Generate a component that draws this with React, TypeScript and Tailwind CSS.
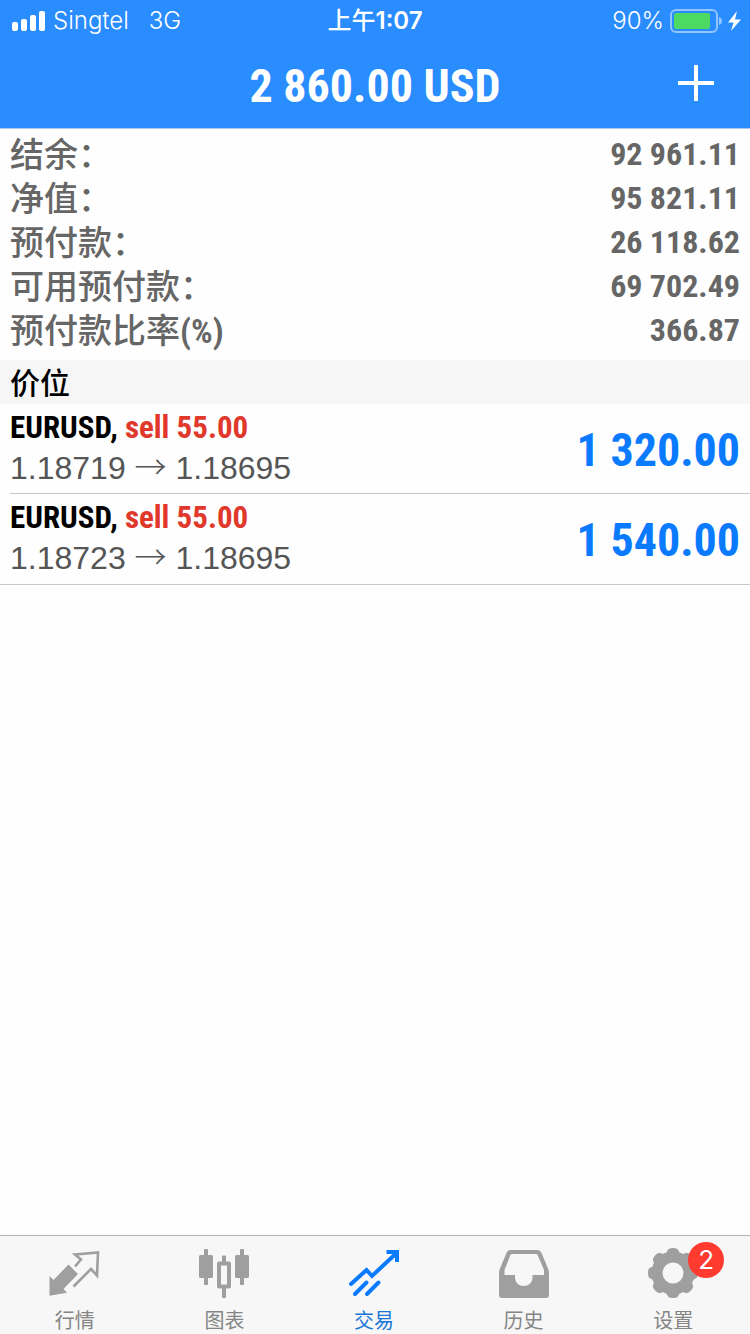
import type { ReactNode } from "react";

const summary = [
  { label: "结余：", value: "92 961.11" },
  { label: "净值：", value: "95 821.11" },
  { label: "预付款：", value: "26 118.62" },
  { label: "可用预付款：", value: "69 702.49" },
  { label: "预付款比率", unit: "(%)", value: "366.87" },
];

const positions = [
  { symbol: "EURUSD", side: "sell 55.00", open: "1.18719", current: "1.18695", profit: "1 320.00" },
  { symbol: "EURUSD", side: "sell 55.00", open: "1.18723", current: "1.18695", profit: "1 540.00" },
];

function StatusBar() {
  return (
    <div className="grid h-10 grid-cols-3 items-center px-2 pt-[2px] font-['Inter','Noto_Sans_CJK_SC',sans-serif] text-[24px] leading-8">
      <div className="flex items-center gap-2 pl-1">
        <svg width="33" height="20" viewBox="0 0 33 20" fill="currentColor" aria-hidden="true">
          <rect x="0" y="11" width="6" height="9" rx="2" />
          <rect x="9" y="8" width="6" height="12" rx="2" />
          <rect x="18" y="4" width="6" height="16" rx="2" />
          <rect x="27" y="0" width="6" height="20" rx="2" />
        </svg>
        <span className="font-light">Singtel</span>
        <span className="pl-3 font-light">3G</span>
      </div>
      <div className="text-center font-semibold">
        <span className="font-medium">上午</span>1:07
      </div>
      <div className="flex items-center justify-end gap-[6px]">
        <span className="font-light">90%</span>
        <svg width="72" height="24" viewBox="0 0 72 24" aria-hidden="true">
          <rect x="1" y="1" width="46" height="22" rx="5" fill="none" stroke="#92c4ff" strokeWidth="2" />
          <rect x="4" y="4" width="36" height="16" rx="2" fill="#4cd964" />
          <path d="M49 8c4 1 4 7 0 8z" fill="#92c4ff" />
          <path d="M67 2 58 13.500h5.500L61 22l10-11.500h-6z" fill="#fff" />
        </svg>
      </div>
    </div>
  );
}

function QuotesIcon() {
  return (
    <svg width="52" height="52" viewBox="0 0 52 52" aria-hidden="true">
      <path d="M26 19.500 32 12.500 26 7.500 49 5.500 48 28.500 42 22 24.500 39.500" fill="none" stroke="currentColor" strokeWidth="2.600" />
      <path d="M.5 29 4.500 33 19.500 17.500 29 27 14.500 42 18 45.700.500 48.700z" fill="currentColor" />
    </svg>
  );
}

function ChartIcon() {
  return (
    <svg width="52" height="52" viewBox="0 0 52 52" fill="currentColor" aria-hidden="true">
      <rect x="1" y="8" width="14" height="23" rx="1.500" />
      <rect x="6" y="2" width="4" height="36" rx="1" />
      <rect x="37" y="8" width="14" height="23" rx="1.500" />
      <rect x="42" y="2" width="4" height="36" rx="1" />
      <rect x="24" y="8.500" width="4" height="7" rx="1" />
      <rect x="24" y="40" width="4" height="11" rx="1" />
      <rect x="21" y="16.500" width="10" height="23" fill="none" stroke="currentColor" strokeWidth="4" strokeLinejoin="round" />
    </svg>
  );
}

function TradeIcon() {
  return (
    <svg width="52" height="52" viewBox="0 0 52 52" fill="none" stroke="currentColor" strokeWidth="4" strokeLinecap="round" aria-hidden="true">
      <path d="M3 37 18.500 23 24 29 48 6.500" />
      <path d="M38.500 5H49V15" strokeLinecap="butt" strokeWidth="4" />
      <path d="M7 47 18.500 35.500M19 47 30.500 35.500" />
    </svg>
  );
}

function HistoryIcon() {
  return (
    <svg width="52" height="52" viewBox="0 0 52 52" fill="currentColor" aria-hidden="true">
      <path
        fillRule="evenodd"
        d="M12.500 3H39.500Q42.300 3 43.300 5.500L50.200 22Q51 24 51 27V48Q51 51 48 51H4Q1 51 1 48V27Q1 24 1.800 22L8.700 5.500Q9.700 3 12.500 3zM14 7Q12.800 7 12.300 8.200L6.500 23V28H17V31A8.700 8 0 0 0 34.500 31V28H46V23L39.700 8.200Q39.200 7 38 7z"
      />
    </svg>
  );
}

function SettingsIcon() {
  return (
    <svg width="52" height="52" viewBox="0 0 52 52" fill="currentColor" aria-hidden="true">
      <circle cx="26" cy="26" r="16" fill="none" stroke="currentColor" strokeWidth="11" />
      {[0, 45, 90, 135, 180, 225, 270, 315].map((angle) => (
        <path key={angle} transform={`rotate(${angle} 26 26)`} d="M18 7Q20 5.500 20.500 3.500Q21.200 1 26 1Q30.800 1 31.500 3.500Q32 5.500 34 7L31 12H21z" />
      ))}
    </svg>
  );
}

type Tab = { label: string; icon: ReactNode; active?: boolean; badge?: string };

const tabs: Tab[] = [
  { label: "行情", icon: <QuotesIcon /> },
  { label: "图表", icon: <ChartIcon /> },
  { label: "交易", icon: <TradeIcon />, active: true },
  { label: "历史", icon: <HistoryIcon /> },
  { label: "设置", icon: <SettingsIcon />, badge: "2" },
];

export default function App() {
  return (
    <div className="flex min-h-screen flex-col bg-[#fefefe] font-['Roboto_Condensed','Liberation_Sans','Noto_Sans_CJK_SC',sans-serif] text-black">
      <header className="border-b border-[#a9c9ee] bg-[#298cff] text-white">
        <StatusBar />
        <div className="grid h-[88px] grid-cols-[1fr_auto_1fr] items-center px-8">
          <h1 className="col-start-2 pt-1 text-[46px] leading-none font-bold">2 860.00 USD</h1>
          <button type="button" aria-label="添加" className="justify-self-end">
            <svg width="44" height="44" viewBox="0 0 44 44" stroke="currentColor" strokeWidth="4" aria-hidden="true">
              <path d="M4 21H40M22 3V39" />
            </svg>
          </button>
        </div>
      </header>

      <main className="flex-1">
        <dl className="px-[10px] pt-[3px] pb-2 text-[#666]">
          {summary.map((row) => (
            <div key={row.label} className="flex h-11 items-center justify-between">
              <dt className="text-[34px] leading-[44px] font-medium">
                <span className="font-['Noto_Sans_CJK_SC',sans-serif]">{row.label}</span>
                {row.unit && <span className="font-bold">{row.unit}</span>}
              </dt>
              <dd className="text-[32px] leading-[44px] font-bold">{row.value}</dd>
            </div>
          ))}
        </dl>

        <h2 className="bg-[#f6f6f6] px-[10px] pb-[2px] font-['Noto_Sans_CJK_SC',sans-serif] text-[30px] leading-[42px] font-medium">价位</h2>

        <ul className="border-b border-[#c8c7cc]">
          {positions.map((p) => (
            <li key={p.open} className="group pl-[10px]">
              <div className="flex items-center justify-between border-b border-[#c8c7cc] pt-1 pr-[10px] pb-[5px] group-last:border-transparent">
                <div>
                  <p className="text-[31px] leading-10 font-bold">
                    {p.symbol}, <span className="text-[#e0392b]">{p.side}</span>
                  </p>
                  <p className="font-['Liberation_Sans',sans-serif] text-[32px] leading-10 text-[#555]">
                    {p.open} <span className="font-['Noto_Sans_CJK_SC',sans-serif] leading-none font-light">→</span> {p.current}
                  </p>
                </div>
                <p className="pt-1 text-[46px] leading-none font-bold text-[#0a7aff]">{p.profit}</p>
              </div>
            </li>
          ))}
        </ul>
      </main>

      <nav className="grid grid-cols-5 border-t border-[#b2b2b2] bg-[#f7f7f7] pr-[2px] font-['Noto_Sans_CJK_SC',sans-serif]">
        {tabs.map((tab) => (
          <button
            key={tab.label}
            type="button"
            className={`flex flex-col items-center gap-[9px] pt-[11px] pb-[2px] ${tab.active ? "text-[#0a7aff]" : "text-[#9f9f9f]"}`}
          >
            <span className="relative">
              {tab.icon}
              {tab.badge && (
                <span className="absolute -top-[5px] -right-[25px] size-9 rounded-full bg-[#ff3b30] text-center font-['Inter',sans-serif] text-[26px] leading-9 text-white">
                  {tab.badge}
                </span>
              )}
            </span>
            <span className={`text-[20px] leading-6 ${tab.active ? "text-[#1b76d8]" : "text-[#858585]"}`}>{tab.label}</span>
          </button>
        ))}
      </nav>
    </div>
  );
}
